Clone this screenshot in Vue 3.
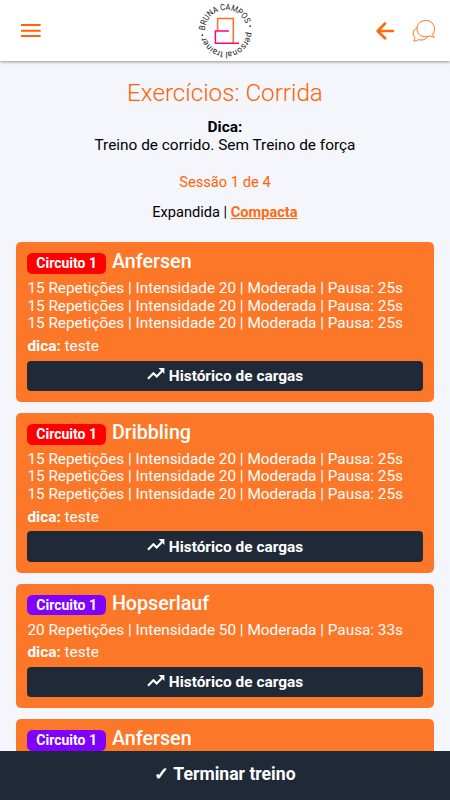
<template>
    <div class="page">
        <header class="topbar">
            <button class="icon-btn menu" aria-label="Menu">
                <svg width="20" height="14" viewBox="0 0 20 14">
                    <path d="M0 1h19.6M0 6.7h19.6M0 12h19.6" stroke="#ff6207" stroke-width="1.9" />
                </svg>
            </button>
            <svg class="logo" width="60" height="60" viewBox="0 0 60 60">
                <defs>
                    <path id="ring-top" d="M9 30a21 21 0 0 1 42 0a21 21 0 0 1 -42 0" />
                    <path id="ring-bottom" d="M51 30a21 21 0 0 1 -42 0a21 21 0 0 1 42 0" />
                </defs>
                <text class="ring upper">
                    <textPath href="#ring-top" startOffset=".7" textLength="57.5" lengthAdjust="spacingAndGlyphs">BRUNA CAMPOS</textPath>
                </text>
                <text class="ring lower">
                    <textPath href="#ring-bottom" startOffset="1" textLength="58.5" lengthAdjust="spacingAndGlyphs">personal trainer</textPath>
                </text>
                <circle cx="6.4" cy="34.2" r=".9" fill="#333" />
                <circle cx="54.2" cy="25.2" r=".9" fill="#333" />
                <path d="M21.6 30V17.4H37.3V42" fill="none" stroke="#ff6d22" stroke-width="1.5" />
                <path d="M33 30H19.4V42.2H43" fill="none" stroke="#fa0873" stroke-width="1.5" />
            </svg>
            <div class="actions">
                <svg width="19" height="18" viewBox="0 0 19 18">
                    <path d="M9 1.5L1.7 9L9 16.3M2.3 9H17" fill="none" stroke="#ff6a0d" stroke-width="2.7" stroke-linecap="round" stroke-linejoin="round" />
                </svg>
                <svg width="24" height="24" viewBox="0 0 24 24" fill="none" stroke="#ff6a0d" stroke-width=".95" stroke-linejoin="round">
                    <path d="M20.6 15.3C22 13.7 22.5 11.9 22.5 9.8C22.5 5 18.6 1.5 13.7 1.5S5 5 5 9.8s3.8 8 8.7 8c1.7 0 3.2-.4 4.5-1.1c1.2 1 2.6 1.5 4.3 1.4c-1.1-.8-1.7-1.6-1.9-2.8z" />
                    <path d="M5 8.6C.5 11.2.2 16.2 3 18.5c-.1 1.5-.8 2.6-1.5 3.4c2 .2 3.5-.3 4.7-1.2c3.8 1 7.5-.1 9.3-2.8" />
                </svg>
            </div>
        </header>

        <main class="content">
            <h1>Exercícios: Corrida</h1>
            <p class="tip"><b>Dica:</b><br>Treino de corrido. Sem Treino de força</p>
            <p class="session">Sessão 1 de 4</p>
            <p class="view-mode">Expandida | <a>Compacta</a></p>

            <section v-for="(item, i) in exercises" :key="i" class="card">
                <div class="card-head">
                    <span class="badge" :class="item.color">Circuito 1</span>
                    <h2>{{ item.name }}</h2>
                </div>
                <template v-if="item.sets">
                    <div v-for="n in item.sets" :key="n" class="set">{{ item.detail }}</div>
                    <div class="note"><b>dica:</b> teste</div>
                    <button class="history">
                        <svg width="18" height="12" viewBox="0 0 18 12">
                            <path d="M1 10.7L6.4 5.3L9.7 8.6L15.6 2.6" fill="none" stroke="#fff" stroke-width="2.1" />
                            <path d="M11.5 0H17.4V5.9z" fill="#fff" />
                        </svg>
                        <span>Histórico de cargas</span>
                    </button>
                </template>
            </section>
        </main>

        <button class="finish">✓ Terminar treino</button>
    </div>
</template>

<script setup>
const strong = '15 Repetições | Intensidade 20 | Moderada | Pausa: 25s';
const light = '20 Repetições | Intensidade 50 | Moderada | Pausa: 33s';

const exercises = [
    { name: 'Anfersen', color: 'red', sets: 3, detail: strong },
    { name: 'Dribbling', color: 'red', sets: 3, detail: strong },
    { name: 'Hopserlauf', color: 'purple', sets: 1, detail: light },
    { name: 'Anfersen', color: 'purple', sets: 0 },
];
</script>

<style>
body {
    margin: 0;
    background: #f4f6fb;
}
</style>

<style scoped>
.page {
    height: 800px;
    display: flex;
    flex-direction: column;
    overflow: hidden;
    background: #f4f6fb;
    color: #000;
    font-family: Roboto, "Liberation Sans", sans-serif;
    font-size: 15.4px;
    line-height: 17.6px;
}
button {
    border: 0;
    padding: 0;
    font-family: inherit;
}
.topbar {
    flex: none;
    height: 61px;
    display: grid;
    grid-template-columns: 1fr 60px 1fr;
    align-items: center;
    padding: 0 14px 0 21px;
    box-sizing: border-box;
    background: #fff;
    box-shadow: 0 1px 3px rgba(0, 0, 0, 0.4);
    z-index: 1;
}
.icon-btn {
    background: none;
    justify-self: start;
    display: flex;
}
.logo {
    margin-left: -2.5px;
    overflow: visible;
}
.ring {
    font-size: 8.6px;
    fill: #222;
}
.lower {
    font-size: 8.7px;
}
.actions {
    display: flex;
    justify-content: flex-end;
    align-items: center;
    gap: 17px;
}
.content {
    flex: 1;
    min-height: 0;
    overflow: hidden;
    padding: 0 16.5px 0 16.4px;
    text-align: center;
}
h1 {
    margin: 18px 0 0;
    font-size: 24.2px;
    line-height: 28px;
    font-weight: 300;
    color: #ff6207;
}
p {
    margin: 0;
}
.tip {
    margin-top: 12px;
}
.session {
    margin-top: 20px;
    font-size: 14.7px;
    color: #ff6207;
}
.view-mode {
    margin: 12.4px 0 20.6px;
    font-size: 14.6px;
}
.view-mode a {
    color: #ff6a0d;
    font-weight: 700;
    text-decoration: underline;
}
.card {
    margin-bottom: 11px;
    padding: 11px;
    border-radius: 5px;
    background: #fc7728;
    color: #fff;
    text-align: left;
}
.card-head {
    display: flex;
    height: 26.8px;
    align-items: flex-start;
    gap: 6px;
}
.badge {
    width: 78.5px;
    height: 20.5px;
    border-radius: 5.5px;
    font-size: 14px;
    font-weight: 700;
    line-height: 21px;
    text-align: center;
}
.red {
    background: #fe0000;
}
.purple {
    background: #7f00ff;
}
h2 {
    margin: -3px 0 0;
    font-size: 19.7px;
    line-height: 23px;
    font-weight: 500;
}
.set {
    font-size: 15.32px;
}
.note {
    height: 27.8px;
    line-height: 27px;
}
.history {
    width: 100%;
    height: 30.3px;
    display: flex;
    align-items: center;
    justify-content: center;
    gap: 4px;
    border-radius: 4px;
    background: #202938;
    color: #fff;
    font-size: 15.4px;
    font-weight: 700;
}
.history svg {
    margin-top: -3px;
}
.finish {
    flex: none;
    height: 49px;
    padding-bottom: 3px;
    background: #202938;
    color: #fff;
    font-size: 17.6px;
    font-weight: 700;
}
</style>
